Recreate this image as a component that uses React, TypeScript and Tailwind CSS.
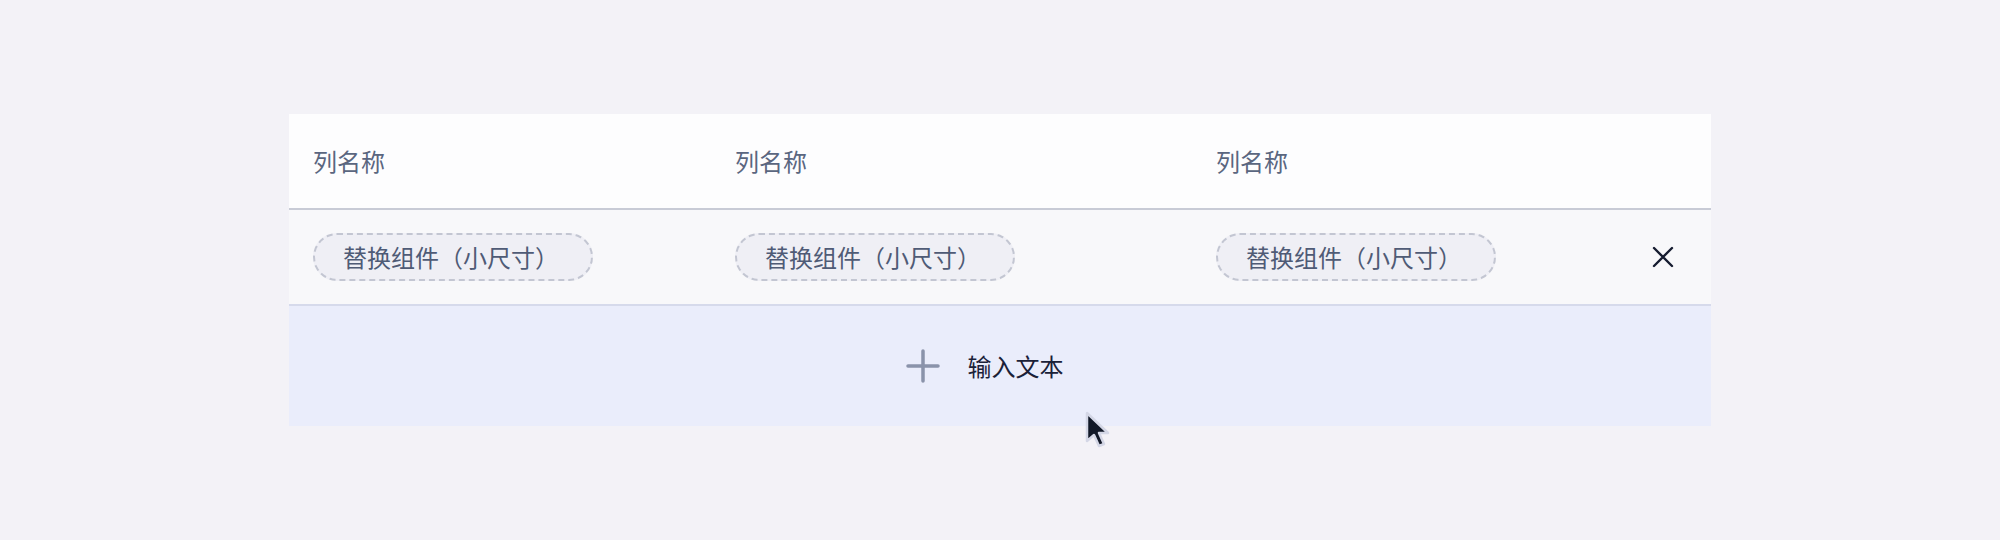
import React from "react";

const font = { fontFamily: '"Noto Sans CJK SC", "Noto Sans", sans-serif' };

function Pill() {
  return (
    <div className="flex h-[48px] w-[280px] items-center rounded-full border-2 border-dashed border-[#c3c6d2] bg-[#efeff5] pl-[28px] text-[24px] text-[#4f5b76]">
      替换组件（小尺寸）
    </div>
  );
}

export default function App() {
  return (
    <div className="relative h-[540px] w-[2000px] bg-[#f3f2f7] pl-[289px] pt-[114px]" style={font}>
      <div className="w-[1422px]">
        <div className="grid h-[96px] grid-cols-[422px_481px_1fr] items-center border-b-2 border-[#c8cbd6] bg-[#fdfdfe] pl-[24px] text-[24px] text-[#5a6680]">
          <div>列名称</div>
          <div>列名称</div>
          <div>列名称</div>
        </div>
        <div className="grid h-[96px] grid-cols-[422px_481px_1fr_auto] items-center border-b-2 border-[#d6daeb] bg-[#f8f8fa] pl-[24px] pr-[37px]">
          <Pill />
          <Pill />
          <Pill />
          <svg width="22" height="22" viewBox="0 0 22 22" fill="none" stroke="#161c30" strokeWidth="2.4" strokeLinecap="round">
            <path d="M2 2L20 20M20 2L2 20" />
          </svg>
        </div>
        <div className="flex h-[120px] items-center justify-center gap-[28px] bg-[#eaedfb] pr-[31px]">
          <svg width="34" height="34" viewBox="0 0 34 34" fill="none" stroke="#8a93aa" strokeWidth="3.5" strokeLinecap="round">
            <path d="M17 2V32M2 17H32" />
          </svg>
          <span className="text-[24px] text-[#1b2138]">输入文本</span>
        </div>
      </div>
      <svg className="absolute left-[1083px] top-[410px]" width="30" height="40" viewBox="0 0 30 40">
        <path d="M4 3 L4 31 L11 25 L16 36 L21 34 L16 23 L25 23 Z" fill="#111827" stroke="#d4d7e6" strokeWidth="2.5" strokeLinejoin="round" />
      </svg>
    </div>
  );
}
